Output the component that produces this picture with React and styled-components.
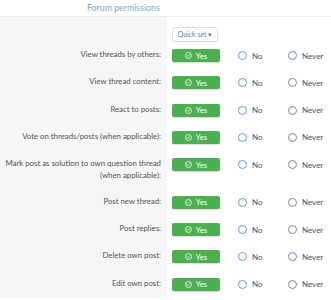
import React from 'react';
import styled, { createGlobalStyle } from 'styled-components';

const GlobalStyle = createGlobalStyle`
  body {
    margin: 0;
    background: #fff;
    font-family: Lato, 'Noto Sans', sans-serif;
  }
`;

const Page = styled.div`
  width: 331px;
  height: 300px;
  overflow: hidden;
`;

const Header = styled.div`
  height: 16px;
  border-bottom: 1px solid #ececec;
  padding-left: 87px;
  font-size: 8.8px;
  line-height: 16px;
  color: #7aa6cf;
`;

const Body = styled.div`
  display: grid;
  grid-template-columns: 167px 1fr;
  background: linear-gradient(to right, #f6f6f6 167px, #fff 167px);
`;

const Label = styled.div`
  padding: 7px 6px 7px 0;
  text-align: right;
  white-space: nowrap;
  font-size: 7.8px;
  line-height: 11.8px;
  color: #525252;
`;

const Controls = styled.div`
  display: flex;
  align-items: flex-start;
  padding: 7px 0 7.3px 5px;
`;

const QuickSet = styled.div`
  grid-column: 2;
  display: flex;
  padding: 10px 0 0 5px;
`;

const QuickButton = styled.button`
  width: 46px;
  height: 15px;
  padding: 0;
  border: 1px solid #dfdfdf;
  border-radius: 3px;
  background: #fff;
  color: #5b84ad;
  font-family: inherit;
  font-size: 7px;
  line-height: 13px;
  box-shadow: 0 1px 1px rgba(0, 0, 0, 0.04);
`;

const YesButton = styled.div`
  width: 48px;
  height: 13px;
  border-radius: 2px;
  background: #4caf50;
  box-shadow: 0 1px 1px rgba(0, 0, 0, 0.15);
  display: flex;
  align-items: center;
  justify-content: center;
  gap: 4px;
  color: #fff;
  font-size: 7.8px;
`;

const Option = styled.div`
  display: flex;
  align-items: center;
  height: 13px;
  gap: 5px;
  margin-left: ${p => p.$gap}px;
  width: ${p => p.$w}px;
  font-size: 8px;
  color: #505050;
`;

const Radio = styled.span`
  width: 7px;
  height: 7px;
  border-radius: 50%;
  border: 1px solid ${p => p.$color};
  background: #fff;
`;

const rows = [
  'View threads by others:',
  'View thread content:',
  'React to posts:',
  'Vote on threads/posts (when applicable):',
  ['Mark post as solution to own question thread', '(when applicable):'],
  'Post new thread:',
  'Post replies:',
  'Delete own post:',
  'Edit own post:',
];

const CheckIcon = () => (
  <svg width="7" height="7" viewBox="0 0 16 16" fill="none" stroke="#fff" strokeWidth="1.8">
    <circle cx="8" cy="8" r="6.8" />
    <path d="M5 8.2l2 2 4-4.2" strokeLinecap="round" strokeLinejoin="round" />
  </svg>
);

const Row = ({ label }) => (
  <>
    <Label>
      {Array.isArray(label) ? (
        <>
          {label[0]}
          <br />
          {label[1]}
        </>
      ) : (
        label
      )}
    </Label>
    <Controls>
      <YesButton>
        <CheckIcon />
        Yes
      </YesButton>
      <Option $gap={18} $w={32}>
        <Radio $color="#5b9bd8" />
        No
      </Option>
      <Option $gap={18} $w={40}>
        <Radio $color="#6b8aa6" />
        Never
      </Option>
    </Controls>
  </>
);

export default function App() {
  return (
    <Page>
      <GlobalStyle />
      <Header>Forum permissions</Header>
      <Body>
        <QuickSet>
          <QuickButton>Quick set ▾</QuickButton>
        </QuickSet>
        {rows.map((r, i) => (
          <Row key={i} label={r} />
        ))}
      </Body>
    </Page>
  );
}
